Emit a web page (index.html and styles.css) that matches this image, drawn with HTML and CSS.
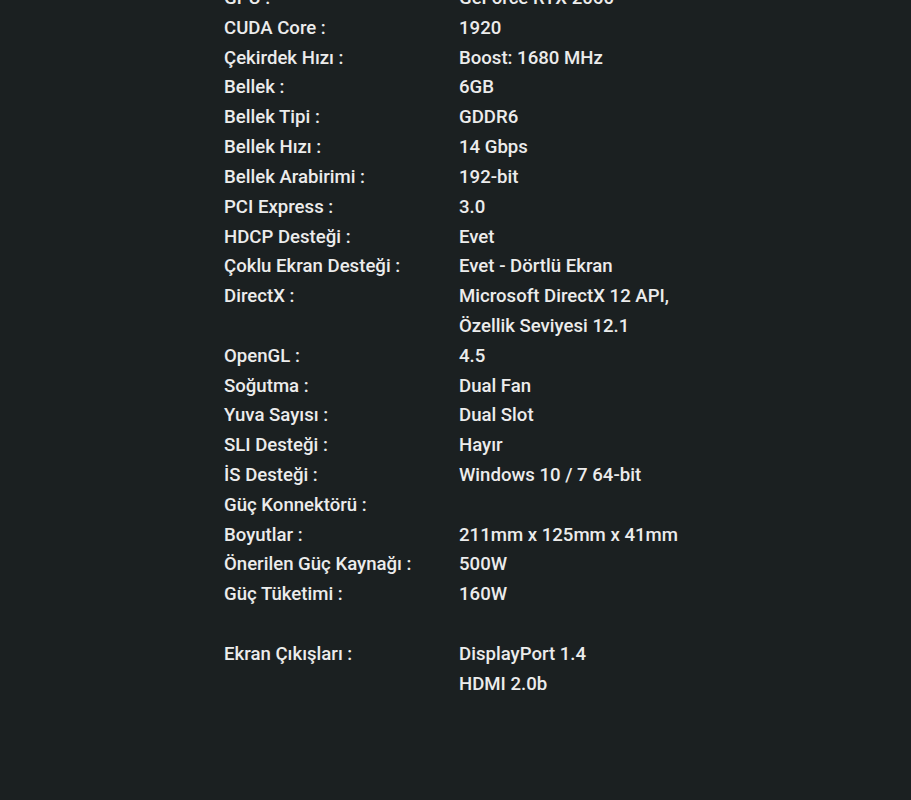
FILE: index.html
```html
<!DOCTYPE html>
<html lang="tr">
<head>
<meta charset="utf-8">
<link rel="stylesheet" href="styles.css">
</head>
<body>
<div class="specs">
  <div class="row"><div class="k">GPU :</div><div class="v">GeForce RTX 2060</div></div>
  <div class="row"><div class="k">CUDA Core :</div><div class="v">1920</div></div>
  <div class="row"><div class="k">Çekirdek Hızı :</div><div class="v">Boost: 1680 MHz</div></div>
  <div class="row"><div class="k">Bellek :</div><div class="v">6GB</div></div>
  <div class="row"><div class="k">Bellek Tipi :</div><div class="v">GDDR6</div></div>
  <div class="row"><div class="k">Bellek Hızı :</div><div class="v">14 Gbps</div></div>
  <div class="row"><div class="k">Bellek Arabirimi :</div><div class="v">192-bit</div></div>
  <div class="row"><div class="k">PCI Express :</div><div class="v">3.0</div></div>
  <div class="row"><div class="k">HDCP Desteği :</div><div class="v">Evet</div></div>
  <div class="row"><div class="k">Çoklu Ekran Desteği :</div><div class="v">Evet - Dörtlü Ekran</div></div>
  <div class="row"><div class="k">DirectX :</div><div class="v">Microsoft DirectX 12 API,<br>Özellik Seviyesi 12.1</div></div>
  <div class="row"><div class="k">OpenGL :</div><div class="v">4.5</div></div>
  <div class="row"><div class="k">Soğutma :</div><div class="v">Dual Fan</div></div>
  <div class="row"><div class="k">Yuva Sayısı :</div><div class="v">Dual Slot</div></div>
  <div class="row"><div class="k">SLI Desteği :</div><div class="v">Hayır</div></div>
  <div class="row"><div class="k">İS Desteği :</div><div class="v">Windows 10 / 7 64-bit</div></div>
  <div class="row"><div class="k">Güç Konnektörü :</div><div class="v"></div></div>
  <div class="row"><div class="k">Boyutlar :</div><div class="v">211mm x 125mm x 41mm</div></div>
  <div class="row"><div class="k">Önerilen Güç Kaynağı :</div><div class="v">500W</div></div>
  <div class="row"><div class="k">Güç Tüketimi :</div><div class="v">160W</div></div>
  <div class="row gap"><div class="k">Ekran Çıkışları :</div><div class="v">DisplayPort 1.4<br>HDMI 2.0b</div></div>
</div>
</body>
</html>
```
FILE: styles.css
```css
html, body {
  margin: 0;
  padding: 0;
  background: #1b2021;
  height: 100%;
  overflow: hidden;
}
body {
  font-family: Roboto, "Noto Sans", sans-serif;
  font-weight: 500;
  font-size: 18.6px;
  line-height: 29.82px;
  color: #ececec;
}
.specs {
  margin-top: -16px;
  padding-left: 224px;
  display: flex;
  flex-direction: column;
}
.row {
  display: grid;
  grid-template-columns: 235px auto;
}
.row.gap {
  margin-top: 29.82px;
}
.v {
  min-height: 29.82px;
}
```
